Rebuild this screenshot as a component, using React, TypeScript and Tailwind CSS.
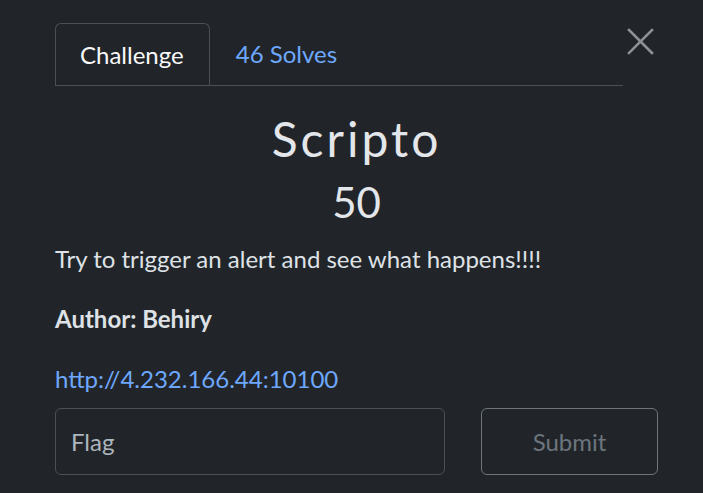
export default function App() {
  return (
    <div className="w-[703px] h-[493px] bg-[#212529] text-[#dee2e6] overflow-hidden" style={{ fontFamily: 'Lato, "Open Sans", sans-serif' }}>
      <div className="pl-[55px] pr-[45px] pt-[23px]">
        <div className="flex items-start">
          <div className="flex-1 flex border-b border-[#495057] mr-[4px]">
            <div className="h-[62px] -mb-px pl-[24px] pr-[25px] flex items-center rounded-t-[6px] border border-b-0 border-[#495057] bg-[#212529] text-[24px] text-[#f8f9fa]">
              Challenge
            </div>
            <div className="h-[62px] px-[26px] flex items-center text-[24px] text-[#6ea8fe]">46 Solves</div>
          </div>
          <button className="mt-[5px] mr-[4px] w-[27px] h-[27px] flex items-center justify-center text-[#8d9196]">
            <svg width="27" height="27" viewBox="0 0 27 27" fill="none" stroke="currentColor" strokeWidth="2.6" strokeLinecap="square">
              <path d="M2 2 L25 25 M25 2 L2 25" />
            </svg>
          </button>
        </div>

        <h2 className="mt-[24px] text-center text-[48px] leading-[58px] tracking-[3px] text-[#e3e6ea]">Scripto</h2>
        <h3 className="mt-[9px] text-center text-[42px] leading-[50px] text-[#e3e6ea]">50</h3>

        <div className="mt-[14px] text-[24px] leading-[36px]">
          <p>Try to trigger an alert and see what happens!!!!</p>
          <p className="mt-[24px] font-bold">Author: Behiry</p>
          <p className="mt-[24px] text-[#6ea8fe]">http://4.232.166.44:10100</p>
        </div>

        <div className="mt-[11px] flex gap-[36px]">
          <div className="w-[390px] h-[67px] rounded-[6px] border border-[#495057] flex items-center px-[15px] text-[24px] text-[#adb5bd]">
            Flag
          </div>
          <button className="w-[177px] h-[67px] rounded-[6px] border border-[#6c757d] text-[24px] text-[#6c757d]">
            Submit
          </button>
        </div>
      </div>
    </div>
  )
}
